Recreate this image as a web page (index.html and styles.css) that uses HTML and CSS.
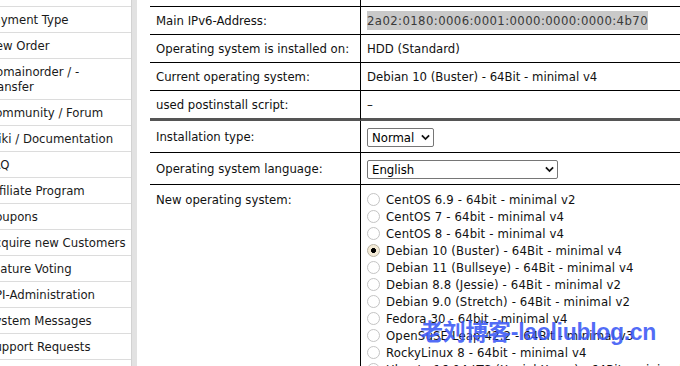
FILE: index.html
```html
<!DOCTYPE html>
<html>
<head>
<meta charset="utf-8">
<link rel="stylesheet" href="styles.css">
</head>
<body>
<div class="page">
  <nav class="sidebar">
    <ul class="menu">
      <li class="menu-item menu-top">&nbsp;</li>
      <li class="menu-item">Payment Type</li>
      <li class="menu-item">New Order</li>
      <li class="menu-item">Domainorder / -<br>Transfer</li>
      <li class="menu-item">Community / Forum</li>
      <li class="menu-item">Wiki / Documentation</li>
      <li class="menu-item">FAQ</li>
      <li class="menu-item">Affiliate Program</li>
      <li class="menu-item">Coupons</li>
      <li class="menu-item">Acquire new Customers</li>
      <li class="menu-item">Feature Voting</li>
      <li class="menu-item">API-Administration</li>
      <li class="menu-item">System Messages</li>
      <li class="menu-item">Support Requests</li>
      <li class="menu-item">&nbsp;</li>
    </ul>
  </nav>
  <div class="divider"></div>
  <main class="content">
    <div class="grid">
      <div class="cell label top"></div><div class="cell value top"></div>

      <div class="cell label">Main IPv6-Address:</div>
      <div class="cell value"><span class="ip">2a02:0180:0006:0001:0000:0000:0000:4b70</span></div>

      <div class="cell label">Operating system is installed on:</div>
      <div class="cell value">HDD (Standard)</div>

      <div class="cell label">Current operating system:</div>
      <div class="cell value">Debian 10 (Buster) - 64Bit - minimal v4</div>

      <div class="cell label sep">used postinstall script:</div>
      <div class="cell value sep">–</div>

      <div class="cell label tall">Installation type:</div>
      <div class="cell value tall"><span class="select sel-type">Normal<svg class="chev" viewBox="0 0 10 7"><path d="M1 1.2 L5 5.2 L9 1.2" fill="none" stroke="#111" stroke-width="2"/></svg></span></div>

      <div class="cell label tall">Operating system language:</div>
      <div class="cell value tall"><span class="select sel-lang">English<svg class="chev" viewBox="0 0 10 7"><path d="M1 1.2 L5 5.2 L9 1.2" fill="none" stroke="#111" stroke-width="2"/></svg></span></div>

      <div class="cell label list">New operating system:</div>
      <div class="cell value list">
        <ul class="radios">
          <li class="radio-row"><span class="radio"></span>CentOS 6.9 - 64bit - minimal v2</li>
          <li class="radio-row"><span class="radio"></span>CentOS 7 - 64bit - minimal v4</li>
          <li class="radio-row"><span class="radio"></span>CentOS 8 - 64bit - minimal v4</li>
          <li class="radio-row"><span class="radio checked"></span>Debian 10 (Buster) - 64Bit - minimal v4</li>
          <li class="radio-row"><span class="radio"></span>Debian 11 (Bullseye) - 64Bit - minimal v4</li>
          <li class="radio-row"><span class="radio"></span>Debian 8.8 (Jessie) - 64Bit - minimal v2</li>
          <li class="radio-row"><span class="radio"></span>Debian 9.0 (Stretch) - 64Bit - minimal v2</li>
          <li class="radio-row"><span class="radio"></span>Fedora 30 - 64bit - minimal v4</li>
          <li class="radio-row"><span class="radio"></span>OpenSuSE Leap 42.2 - 64Bit - minimal v3</li>
          <li class="radio-row"><span class="radio"></span>RockyLinux 8 - 64bit - minimal v4</li>
          <li class="radio-row"><span class="radio"></span>Ubuntu 16.04 LTS (Xenial Xerus) - 64Bit - minimal v4</li>
        </ul>
      </div>
    </div>
  </main>
  <div class="watermark">老刘博客-laoliublog.cn</div>
</div>
</body>
</html>
```
FILE: styles.css
```css
html, body {
  margin: 0;
  padding: 0;
  background: #fff;
  overflow: hidden;
}
body {
  font-family: "DejaVu Sans Condensed", "DejaVu Sans", sans-serif;
  font-size: 13px;
  color: #111;
}
.page {
  position: relative;
  display: flex;
  width: 680px;
  height: 366px;
  overflow: hidden;
}
.sidebar {
  width: 131px;
  flex: none;
  overflow: hidden;
  background: #fff;
}
.menu {
  list-style: none;
  margin: -19px 0 0 -13px;
  padding: 0;
}
.menu-item {
  border-top: 1px solid #dcdcdc;
  padding: 5px 0;
  line-height: 15px;
  white-space: nowrap;
  color: #1a1a1a;
}
.menu-top {
  border-top: none;
}
.divider {
  flex: none;
  width: 5px;
  background: #e2e2e2;
  border-left: 1px solid #d2d2d2;
}
.content {
  flex: 1;
  padding-left: 13px;
  overflow: hidden;
}
.grid {
  display: grid;
  grid-template-columns: 211px 1fr;
  width: 560px;
}
.cell {
  border-bottom: 1px solid #000;
  height: 27px;
  line-height: 27px;
  white-space: nowrap;
}
.label {
  padding-left: 6px;
  border-right: 1px solid #000;
}
.value {
  padding-left: 6px;
}
.top {
  height: 6px;
}
.sep {
  border-bottom: 3px solid #555;
}
.tall {
  height: 31px;
  line-height: 31px;
}
.list {
  height: 200px;
  border-bottom: none;
  line-height: 17px;
  padding-top: 6px;
}
.ip {
  background: #c9c9c9;
  color: #3a3a3a;
  padding: 2px 0;
  letter-spacing: 0.4px;
}
.select {
  display: inline-flex;
  align-items: center;
  justify-content: space-between;
  box-sizing: border-box;
  height: 19px;
  line-height: 17px;
  border: 1px solid #767676;
  border-radius: 2px;
  padding: 0 3px 0 4px;
  vertical-align: middle;
  color: #000;
}
.sel-type {
  width: 67px;
}
.sel-lang {
  width: 191px;
}
.chev {
  width: 9px;
  height: 7px;
}
.radios {
  list-style: none;
  margin: 0;
  padding: 0;
}
.radio-row {
  display: flex;
  align-items: center;
  height: 17px;
  letter-spacing: 0.15px;
}
.radio {
  box-sizing: border-box;
  width: 13px;
  height: 13px;
  border-radius: 50%;
  border: 1px solid #c4c4c4;
  background: #fff;
  margin-right: 6px;
  flex: none;
}
.radio.checked {
  border-color: #b9b3a4;
  background: radial-gradient(circle, #000 0 2.2px, #f3ead6 2.8px);
}
.watermark {
  position: absolute;
  left: 420px;
  top: 313px;
  font-family: "Liberation Sans", "Noto Sans CJK SC", sans-serif;
  font-weight: bold;
  font-size: 23px;
  color: rgba(58, 88, 245, 0.88);
  white-space: nowrap;
  letter-spacing: -0.3px;
}
```
